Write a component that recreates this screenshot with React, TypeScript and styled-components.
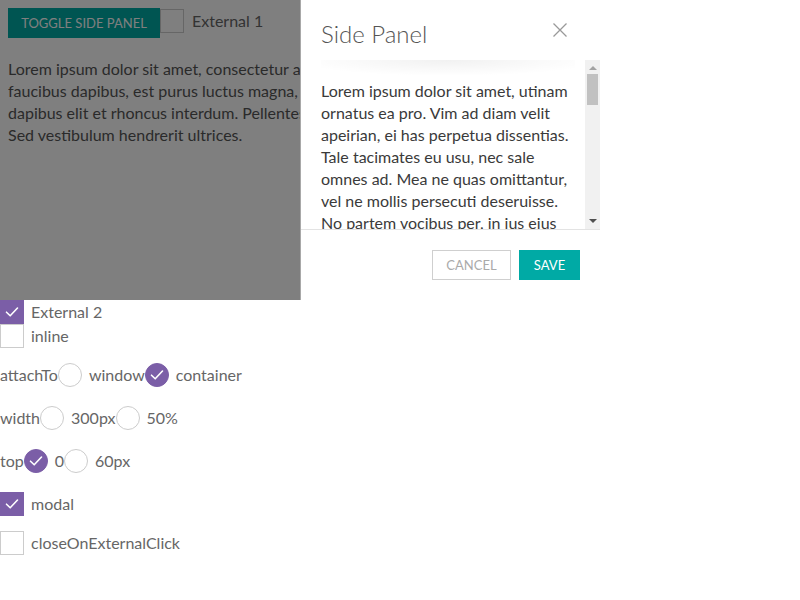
import React from "react";
import styled, { createGlobalStyle } from "styled-components";

const GlobalStyle = createGlobalStyle`
  html, body { margin: 0; padding: 0; background: #fff; }
  body { font-family: "Lato", "Open Sans", sans-serif; font-size: 16px; color: #555; }
  * { box-sizing: border-box; }
`;

const Stage = styled.div`
  position: relative;
  width: 600px;
  height: 300px;
  overflow: hidden;
`;

const Content = styled.div`
  padding: 8px;
`;

const TopRow = styled.div`
  display: flex;
  align-items: flex-start;
`;

const PrimaryButton = styled.button<{ $w?: number }>`
  width: ${(p) => p.$w ?? 61}px;
  height: 30px;
  padding: 0;
  border: none;
  border-radius: 0;
  background: #00aaa5;
  color: #fff;
  font-family: inherit;
  font-size: 13px;
  text-transform: uppercase;
  cursor: pointer;
`;

const GhostButton = styled.button`
  width: 79px;
  height: 30px;
  padding: 0;
  border: 1px solid #cfcfcf;
  background: #fff;
  color: #aaa;
  font-family: inherit;
  font-size: 13px;
  text-transform: uppercase;
`;

const Box = styled.span<{ $checked?: boolean }>`
  flex: none;
  display: inline-flex;
  align-items: center;
  justify-content: center;
  width: 24px;
  height: 24px;
  border: 1px solid ${(p) => (p.$checked ? "#7b5ea7" : "#ccc")};
  background: ${(p) => (p.$checked ? "#7b5ea7" : "#fff")};
`;

const Round = styled(Box)`
  border-radius: 50%;
`;

const Check = () => (
  <svg width="14" height="12" viewBox="0 0 14 12" fill="none">
    <path d="M1.5 6.2 L5.2 9.8 L12.5 2" stroke="#fff" strokeWidth="1.6" strokeLinecap="round" strokeLinejoin="round" />
  </svg>
);

const Label = styled.span<{ $ml?: number }>`
  margin-left: ${(p) => p.$ml ?? 7}px;
  color: #666;
  line-height: 24px;
  white-space: nowrap;
`;

const CheckRow = styled.label<{ $mt?: number }>`
  display: flex;
  align-items: center;
  height: 24px;
  margin-top: ${(p) => p.$mt ?? 0}px;
`;

const Paragraph = styled.p`
  margin: 20px 0 0;
  line-height: 22px;
  white-space: nowrap;
`;

const Overlay = styled.div`
  position: absolute;
  inset: 0;
  background: rgba(0, 0, 0, 0.5);
`;

const Panel = styled.aside`
  position: absolute;
  top: 0;
  right: 0;
  width: 300px;
  height: 300px;
  background: #fff;
  border-left: 1px solid #a8a8a8;
  display: flex;
  flex-direction: column;
`;

const PanelHeader = styled.header`
  position: relative;
  flex: none;
  height: 60px;
  padding: 0 33px 0 20px;
  display: flex;
  align-items: center;
  justify-content: space-between;
  &::after {
    content: "";
    position: absolute;
    left: 20px;
    right: 25px;
    bottom: -16px;
    height: 16px;
    background: radial-gradient(ellipse 60% 100% at 50% 0%, rgba(0, 0, 0, 0.055), rgba(0, 0, 0, 0) 100%);
    pointer-events: none;
    z-index: 1;
  }
`;

const PanelTitle = styled.h2`
  margin: 0;
  font-size: 24px;
  font-weight: 300;
  color: #555;
  padding-top: 6px;
`;

const CloseButton = styled.button`
  width: 14px;
  height: 14px;
  padding: 0;
  border: none;
  background: none;
  display: flex;
  align-items: center;
  justify-content: center;
`;

const PanelBody = styled.div`
  flex: none;
  height: 170px;
  display: flex;
  border-bottom: 1px solid #e3e3e3;
`;

const BodyText = styled.div`
  flex: 1;
  min-width: 0;
  overflow: hidden;
  padding: 20px 2px 0 20px;
  line-height: 22px;
  color: #3a3a3a;
`;

const ScrollBar = styled.div`
  flex: none;
  width: 15px;
  background: #f1f1f1;
  display: flex;
  flex-direction: column;
  align-items: center;
`;

const Arrow = styled.span<{ $down?: boolean }>`
  flex: none;
  width: 0;
  height: 0;
  border-left: 4px solid transparent;
  border-right: 4px solid transparent;
  ${(p) =>
    p.$down
      ? "border-top: 4px solid #505050; margin: auto 0 6px;"
      : "border-bottom: 4px solid #a3a3a3; margin: 6px 0 4px;"}
`;

const Thumb = styled.span`
  flex: none;
  width: 11px;
  height: 31px;
  background: #c1c1c1;
`;

const PanelFooter = styled.footer`
  flex: 1;
  display: flex;
  align-items: center;
  justify-content: flex-end;
  gap: 8px;
  padding: 0 20px;
`;

const Controls = styled.div`
  display: flex;
  flex-direction: column;
`;

const RadioGroup = styled.div<{ $mt: number }>`
  display: flex;
  align-items: center;
  height: 24px;
  margin-top: ${(p) => p.$mt}px;
  color: #666;
`;

const GroupName = styled.span`
  line-height: 24px;
`;

const Option = styled.span`
  display: flex;
  align-items: center;
`;

type Opt = { label: string; checked?: boolean };

const Radios = ({ name, options, mt }: { name: string; options: Opt[]; mt: number }) => (
  <RadioGroup $mt={mt}>
    <GroupName>{name}</GroupName>
    {options.map((o) => (
      <Option key={o.label}>
        <Round $checked={o.checked}>{o.checked && <Check />}</Round>
        <Label>{o.label}</Label>
      </Option>
    ))}
  </RadioGroup>
);

const panelText =
  "Lorem ipsum dolor sit amet, utinam ornatus ea pro. Vim ad diam velit apeirian, ei has perpetua dissentias. Tale tacimates eu usu, nec sale omnes ad. Mea ne quas omittantur, vel ne mollis persecuti deseruisse. No partem vocibus per, in ius eius tempor. Ex vel stet vidit, vim at regione sensibus. Has at graeci aliquid, et usu vide diceret.";

export default function App() {
  return (
    <>
      <GlobalStyle />
      <Stage>
        <Content>
          <TopRow>
            <PrimaryButton $w={152}>Toggle side panel</PrimaryButton>
            <CheckRow $mt={1}>
              <Box />
              <Label $ml={8}>External 1</Label>
            </CheckRow>
          </TopRow>
          <Paragraph>
            Lorem ipsum dolor sit amet, consectetur adipiscing elit. Vestibulum lacinia
            <br />
            faucibus dapibus, est purus luctus magna, ut sodales nibh nisl in augue.
            <br />
            dapibus elit et rhoncus interdum. Pellentesque habitant morbi tristique.
            <br />
            Sed vestibulum hendrerit ultrices.
          </Paragraph>
        </Content>
        <Overlay />
        <Panel>
          <PanelHeader>
            <PanelTitle>Side Panel</PanelTitle>
            <CloseButton aria-label="close">
              <svg width="14" height="14" viewBox="0 0 14 14">
                <path d="M0.5 0.5 L13.5 13.5 M13.5 0.5 L0.5 13.5" stroke="#999" strokeWidth="1.3" />
              </svg>
            </CloseButton>
          </PanelHeader>
          <PanelBody>
            <BodyText>{panelText}</BodyText>
            <ScrollBar aria-hidden>
              <Arrow />
              <Thumb />
              <Arrow $down />
            </ScrollBar>
          </PanelBody>
          <PanelFooter>
            <GhostButton>Cancel</GhostButton>
            <PrimaryButton $w={61}>Save</PrimaryButton>
          </PanelFooter>
        </Panel>
      </Stage>
      <Controls>
        <CheckRow>
          <Box $checked>
            <Check />
          </Box>
          <Label>External 2</Label>
        </CheckRow>
        <CheckRow>
          <Box />
          <Label>inline</Label>
        </CheckRow>
        <Radios name="attachTo" mt={15} options={[{ label: "window" }, { label: "container", checked: true }]} />
        <Radios name="width" mt={19} options={[{ label: "300px" }, { label: "50%" }]} />
        <Radios name="top" mt={19} options={[{ label: "0", checked: true }, { label: "60px" }]} />
        <CheckRow $mt={19}>
          <Box $checked>
            <Check />
          </Box>
          <Label>modal</Label>
        </CheckRow>
        <CheckRow $mt={15}>
          <Box />
          <Label>closeOnExternalClick</Label>
        </CheckRow>
      </Controls>
    </>
  );
}
